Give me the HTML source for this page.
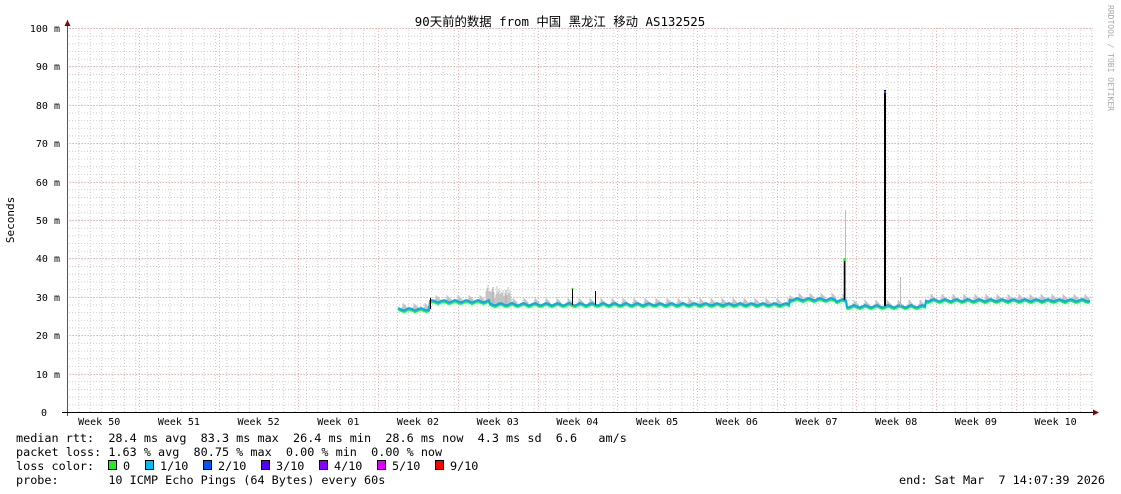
<!DOCTYPE html>
<html><head><meta charset="utf-8"><style>
html,body{margin:0;padding:0;background:#fff;width:1121px;height:494px;overflow:hidden}
svg text{font-family:"DejaVu Sans Mono","Liberation Mono",monospace;fill:#000}
</style></head><body>
<svg id="g" width="1121" height="494" xmlns="http://www.w3.org/2000/svg">
<defs>
<pattern id="minorV" x="67" y="0" width="11.38" height="494" patternUnits="userSpaceOnUse">
<line x1="0.5" y1="0" x2="0.5" y2="494" stroke="#ccc" stroke-width="1" stroke-dasharray="1,2"/>
</pattern>
<pattern id="minorH" x="0" y="28" width="1121" height="7.68" patternUnits="userSpaceOnUse">
<line x1="0" y1="0.5" x2="1121" y2="0.5" stroke="#ccc" stroke-width="1" stroke-dasharray="1,2"/>
</pattern>
</defs>
<rect x="67" y="28" width="1026" height="384" fill="url(#minorV)"/>
<rect x="67" y="28" width="1026" height="384" fill="url(#minorH)"/>
<g id="major" stroke="#f0b0b0" stroke-width="1" stroke-dasharray="1,2"></g>
<g id="data"></g>
<line x1="67.5" y1="20" x2="67.5" y2="416" stroke="#555"/>
<line x1="62" y1="412.5" x2="1096" y2="412.5" stroke="#000"/>
<polygon points="64.5,26 67.5,20 70.5,26" fill="#800"/>
<polygon points="1093,409.5 1099,412.5 1093,415.5" fill="#800"/>
<g id="lbl" font-size="10"></g>
<text x="560" y="26" font-size="12.4" text-anchor="middle" style='font-family:"DejaVu Sans Mono","Noto Sans CJK SC",monospace'>90天前的数据 from 中国 黑龙江 移动 AS132525</text>
<text transform="translate(14,220) rotate(-90)" font-size="11" text-anchor="middle">Seconds</text>
<text transform="translate(1108,5) rotate(90)" font-size="8" style="fill:#aaa">RRDTOOL / TOBI OETIKER</text>
<g font-size="11.8">
<text x="16" y="442" xml:space="preserve">median rtt:  28.4 ms avg  83.3 ms max  26.4 ms min  28.6 ms now  4.3 ms sd  6.6   am/s</text>
<text x="16" y="456" xml:space="preserve">packet loss: 1.63 % avg  80.75 % max  0.00 % min  0.00 % now</text>
<text x="16" y="470" xml:space="preserve">loss color:  </text>
<text x="16" y="484" xml:space="preserve">probe:       10 ICMP Echo Pings (64 Bytes) every 60s</text>
<text x="1105" y="484" text-anchor="end" xml:space="preserve">end: Sat Mar  7 14:07:39 2026</text>
</g>
<g id="leg" font-size="11.8"></g>
</svg>
<script>
var NS="http://www.w3.org/2000/svg",svg=document.getElementById('g');
function el(p,t,a,txt){var e=document.createElementNS(NS,t);for(var k in a)e.setAttribute(k,a[k]);if(txt!=null)e.textContent=txt;p.appendChild(e);return e;}
var maj=document.getElementById('major'),lbl=document.getElementById('lbl');
for(var i=0;i<=10;i++){var y=412-i*38.4;if(i>0)el(maj,'line',{x1:67,y1:Math.round(y)+.5,x2:1093,y2:Math.round(y)+.5});
 el(lbl,'text',{x:i==0?47:60,y:Math.round(y)+4,'text-anchor':'end'},i==0?'0':(i*10)+' m');}
var wk=['50','51','52','01','02','03','04','05','06','07','08','09','10'];
for(var k=0;k<13;k++){var bx=139+79.7*k;if(bx<1093)el(maj,'line',{x1:Math.round(bx)+.5,y1:28,x2:Math.round(bx)+.5,y2:412});
 el(lbl,'text',{x:bx-39.8,y:425,'text-anchor':'middle'},'Week '+wk[k]);}
var d=document.getElementById('data');
function lvl(x){if(x<430)return 309;if(x<490)return 301;if(x<790)return 304;if(x<836)return 299;if(x<847)return 300;if(x<926)return 306;return 300;}
var g='',b='',gr='';
for(var x=398;x<=1090;x++){var ph=((x-398)%11.4)/11.4;var w=ph<0.5?ph*2:2-ph*2;var y=lvl(x)+w*2.5-1;
 b+=x+','+y.toFixed(1)+' ';g+=x+','+(y+1.5).toFixed(1)+' ';
 var r=(x*7919)%11;if(r<6||(x>485&&x<512)){var s=lvl(x)-2-r%5;if(x>485&&x<512)s-=4+(x*13)%9;gr+='M'+x+' '+y.toFixed(1)+'V'+s;}}
el(d,'path',{d:gr,stroke:'#c4c4c4','stroke-width':1});
el(d,'polyline',{points:g,fill:'none',stroke:'#2e2','stroke-width':2});
el(d,'polyline',{points:b,fill:'none',stroke:'#0af','stroke-width':2});
function spike(x,y0,y1,c,w){el(d,'line',{x1:x,y1:y0,x2:x,y2:y1,stroke:c,'stroke-width':w||1});}
spike(845.5,300,210,'#bbb',1);spike(900.5,306,277,'#bbb');spike(493,304,287,'#aaa');spike(506,304,290,'#aaa');
spike(430.5,309,298,'#000');spike(572.5,305,288,'#000');spike(595.5,305,291,'#000');spike(844.5,300,260,'#000',1.5);
spike(885,306,90,'#000',2);spike(885,93,91,'#06f',2);spike(572.5,289,288,'#2e2',2);spike(844.5,261,258,'#2e2',2);
var leg=document.getElementById('leg');
var items=[['#22ee22','0'],['#00bbff','1/10'],['#0055ff','2/10'],['#5500ff','3/10'],['#8800ff','4/10'],['#dd00ff','5/10'],['#ff0000','9/10']];
var xs=[108,145,203,261,319,377,435];
items.forEach(function(it,i){el(leg,'rect',{x:xs[i]+.5,y:460.5,width:8,height:9,fill:it[0],stroke:'#000'});el(leg,'text',{x:xs[i]+15,y:470},it[1]);});
</script>
</body></html>
